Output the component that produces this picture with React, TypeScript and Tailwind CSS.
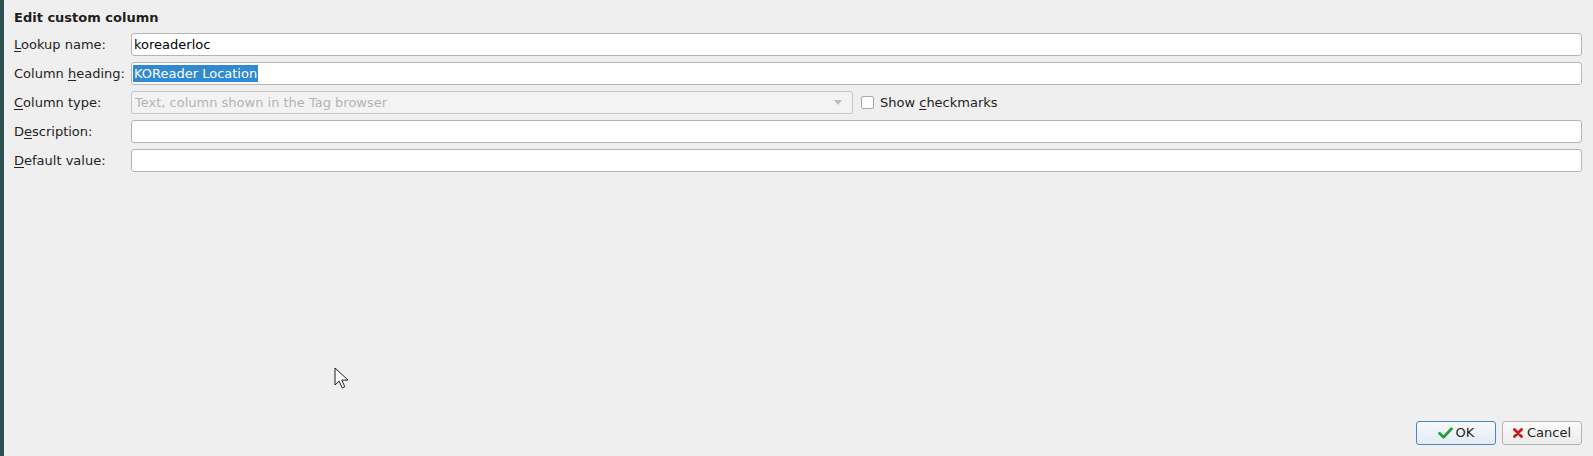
import React from "react";

const font = { fontFamily: '"DejaVu Sans", Verdana, sans-serif' };

function Label({ children }: { children: React.ReactNode }) {
  return (
    <div className="flex items-center text-[13px] text-[#232323] h-[23px]">
      <span>{children}</span>
    </div>
  );
}

function Field({ children }: { children?: React.ReactNode }) {
  return (
    <div className="h-[23px] rounded-[3px] border border-[#b4b4b4] bg-white flex items-center px-[1px] text-[13px] text-black">
      {children}
    </div>
  );
}

export default function App() {
  return (
    <div className="flex h-[456px] w-[1593px] bg-[#efefef]" style={font}>
      <div className="w-[4px] bg-[#2e5050]" />
      <div className="relative flex flex-1 flex-col pl-[10px] pr-[11px] pt-[10px] pb-[11px]">
        <div className="h-[16px] text-[13px] font-bold leading-[16px] text-[#1e1e1e]">Edit custom column</div>
        <div className="mt-[7px] grid grid-cols-[117px_1fr] gap-y-[6px]">
          <Label>
            <u className="underline-offset-2">L</u>ookup name:
          </Label>
          <Field>
            <span className="pl-[1px]">koreaderloc</span>
          </Field>

          <Label>
            Column <u className="underline-offset-2">h</u>eading:
          </Label>
          <Field>
            <span className="bg-[#3189cf] px-[1px] text-white leading-[17px]">KOReader Location</span>
          </Field>

          <Label>
            <u className="underline-offset-2">C</u>olumn type:
          </Label>
          <div className="flex items-center">
            <div className="flex h-[23px] w-[722px] items-center justify-between rounded-[3px] border border-[#c6c6c6] bg-[#f3f3f3] pl-[3px] pr-[10px] text-[13px] text-[#b3b3b3]">
              <span>Text, column shown in the Tag browser</span>
              <svg width="8" height="5" viewBox="0 0 8 5">
                <path d="M0 0h8L4 5z" fill="#bdbdbd" />
              </svg>
            </div>
            <div className="ml-[8px] h-[13px] w-[13px] rounded-[2px] border border-[#a8a8a8] bg-white" />
            <span className="ml-[6px] text-[13px] text-[#232323]">
              Show <u className="underline-offset-2">c</u>heckmarks
            </span>
          </div>

          <Label>
            D<u className="underline-offset-2">e</u>scription:
          </Label>
          <Field />

          <Label>
            <u className="underline-offset-2">D</u>efault value:
          </Label>
          <Field />
        </div>

        <div className="mt-auto flex justify-end gap-[6px]">
          <button className="flex h-[24px] w-[80px] items-center justify-center gap-[3px] rounded-[3px] border border-[#4a89c0] bg-gradient-to-b from-[#f6f9fc] to-[#e2ebf3] text-[13px] text-[#1e1e1e]">
            <svg width="15" height="12" viewBox="0 0 15 12">
              <path d="M1.5 6.2l4 4L13.5 1.8" fill="none" stroke="#2a9d3c" strokeWidth="2.8" strokeLinecap="round" strokeLinejoin="round" />
            </svg>
            OK
          </button>
          <button className="flex h-[24px] w-[80px] items-center justify-center gap-[4px] rounded-[3px] border border-[#b4b4b4] bg-gradient-to-b from-[#fafafa] to-[#ececec] text-[13px] text-[#1e1e1e]">
            <svg width="10" height="10" viewBox="0 0 10 10">
              <path d="M1.5 1.5l7 7M8.5 1.5l-7 7" stroke="#c8141a" strokeWidth="2.8" strokeLinecap="round" />
            </svg>
            Cancel
          </button>
        </div>

        <svg className="absolute left-[330px] top-[367px]" width="15" height="24" viewBox="0 0 15 24">
          <path d="M1 1v17l4.2-3.9 3 6.8 2.6-1.1-3-6.7H14z" fill="#fff" stroke="#1a1a1a" strokeWidth="1" strokeLinejoin="round" />
        </svg>
      </div>
    </div>
  );
}
